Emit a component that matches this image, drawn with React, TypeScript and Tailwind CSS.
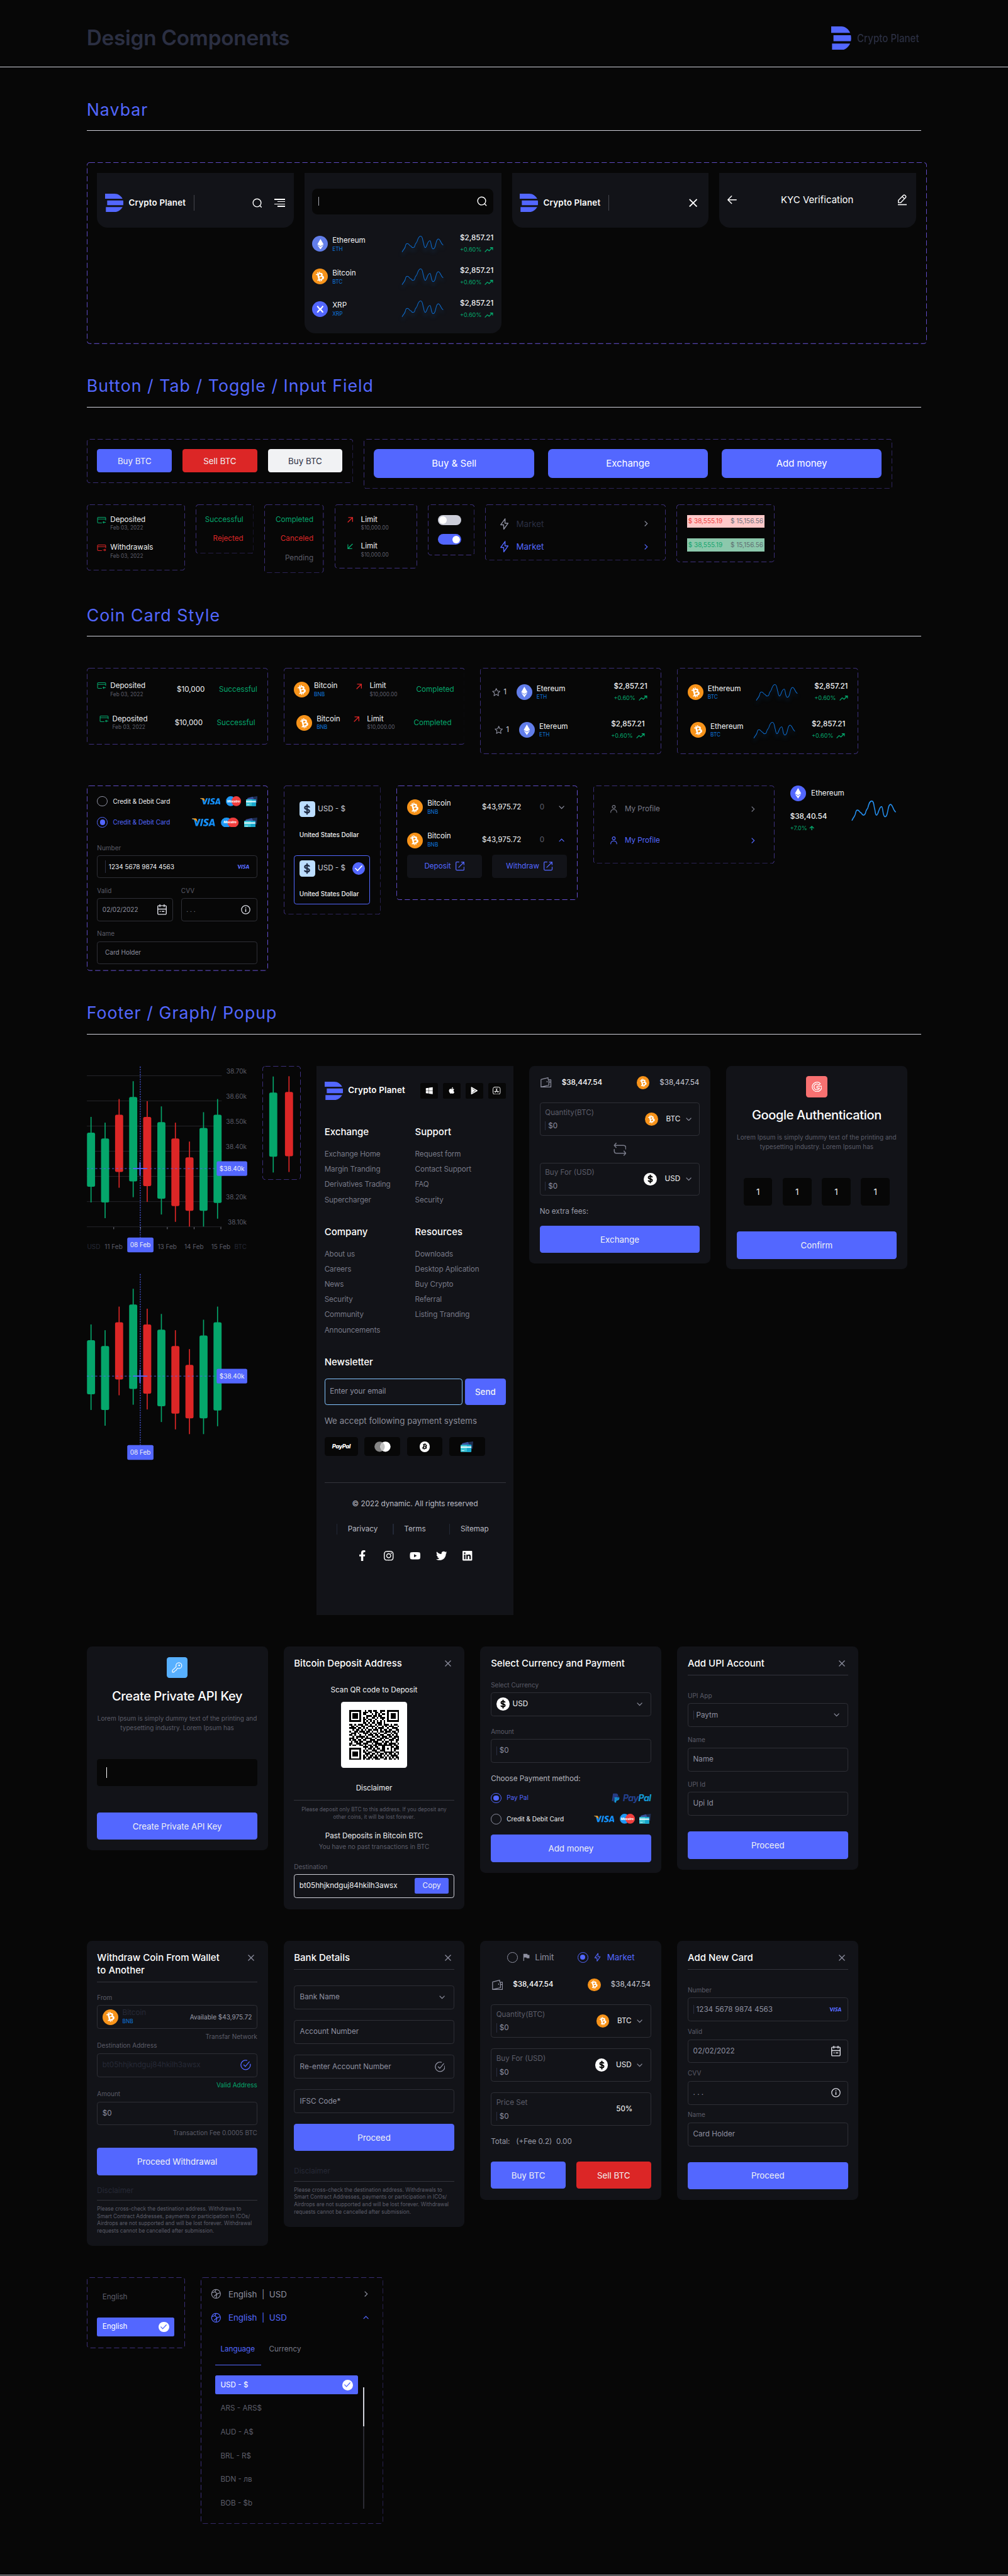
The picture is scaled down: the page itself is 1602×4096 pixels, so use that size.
import React from "react";
import type { ReactNode } from "react";
import {
  FaApple,
  FaBtc,
  FaEthereum,
  FaFacebookF,
  FaInstagram,
  FaLinkedin,
  FaPaypal,
  FaTwitter,
  FaWindows,
  FaYoutube,
} from "react-icons/fa";
import { SiVisa } from "react-icons/si";

/* ---------- shared pieces ---------- */

type Box = { className?: string; children?: ReactNode };

function Dashed({ className = "", bright = false, children }: Box & { bright?: boolean }) {
  return (
    <div className={`relative shrink-0 ${className}`}>
      <svg className="pointer-events-none absolute inset-0 size-full" fill="none">
        <rect
          x="0.5"
          y="0.5"
          rx="5"
          className="h-[calc(100%-1px)] w-[calc(100%-1px)]"
          stroke="#7B61FF"
          strokeOpacity={bright ? 1 : 0.6}
          strokeDasharray="10 5"
        />
      </svg>
      {children}
    </div>
  );
}

function Section({ title, className = "", children }: Box & { title: string }) {
  return (
    <section className={`ml-[165px] flex flex-col ${className}`}>
      <h2 className="text-[32px] leading-[39px] tracking-[0.039em] text-[#5367FF]">{title}</h2>
      <div className="mt-[20px] h-px w-[1590px] shrink-0 bg-[#CFD0D9]" />
      {children}
    </section>
  );
}

function Card({ className = "", children }: Box) {
  return <div className={`flex w-[345px] shrink-0 flex-col rounded-[10px] bg-[#121318] px-[20px] ${className}`}>{children}</div>;
}

function Logo({ className = "" }: { className?: string }) {
  return (
    <svg viewBox="0 0 35 35" preserveAspectRatio="none" className={className} fill="#5367FF">
      <path d="M0 0H18C25 0 30 4 33.3 9.5H0Z" />
      <path d="M4 13H34.4C35.2 16 35.2 19 34.4 22H4Z" />
      <path d="M1.5 25.5H33.3C30 31 25 35 18 35H1.5Z" />
    </svg>
  );
}

function Btc({ className = "size-[30px]" }: { className?: string }) {
  return (
    <span className={`flex shrink-0 items-center justify-center rounded-full bg-[#F7931A] text-white ${className}`}>
      <FaBtc className="h-[62%] w-[62%] -rotate-14" />
    </span>
  );
}

function Eth({ className = "bg-[#627EEA]" }: { className?: string }) {
  return (
    <span className={`flex size-[30px] shrink-0 items-center justify-center rounded-full text-white ${className}`}>
      <FaEthereum className="size-[20px]" />
    </span>
  );
}

function Xrp() {
  return (
    <span className="flex size-[30px] shrink-0 items-center justify-center rounded-full bg-[#5367FF]">
      <svg viewBox="0 0 14 14" className="size-[14px]" fill="none" stroke="#fff" strokeWidth="2.6">
        <path d="M1.5 0.8L5 5.2Q7 7.2 9 5.2L12.5 0.8M1.5 13.2L5 8.8Q7 6.8 9 8.8L12.5 13.2" />
      </svg>
    </span>
  );
}

function Dollar({ className = "size-[25px] rounded-full bg-white text-black" }: { className?: string }) {
  return (
    <span className={`flex shrink-0 items-center justify-center ${className}`}>
      <svg viewBox="0 0 24 24" className="size-[72%]" fill="none" stroke="currentColor" strokeWidth="3">
        <path d="M12 1v22M17 8.2C16.4 6.2 14.5 5.2 12 5.2c-2.8 0-4.8 1.3-4.8 3.4 0 2 1.6 2.8 4.8 3.4s4.9 1.5 4.9 3.5c0 2.1-2 3.4-4.9 3.4-2.7 0-4.7-1.1-5.2-3.2" />
      </svg>
    </span>
  );
}

function Spark({ className = "h-[31px] w-[78px] text-[#0E6FD3] drop-shadow-[0_6px_4px_rgba(14,111,211,0.35)]", width = 1.2 }) {
  return (
    <svg viewBox="0 0 78 31" preserveAspectRatio="none" fill="none" stroke="currentColor" strokeWidth={width} strokeLinecap="round" className={`shrink-0 overflow-visible ${className}`}>
      <path d="M.2 30.5C4 24 4.5 25.5 6 21C7.5 14 9 14.5 11 15C14 16 14 19 17 19.5C19 23.5 22.5 23.5 24 20C26 12 27 14.5 28.5 11C30.5 4 32 .5 35.5 .5C39.5 .5 39 9 41 14C42 20 42.5 22.5 44 22.5C47.5 22.5 48 9.3 53 9.3C56 9.3 54.5 25 59.5 25C65 25 63.5 6 69 6C73 6 73.5 15 78 17.5" />
    </svg>
  );
}

function Trend() {
  return (
    <svg viewBox="0 0 17 10" className="h-[10px] w-[17px]" fill="none" stroke="currentColor" strokeWidth="1.6">
      <path d="M.8 9.3L5.5 4.3L9 7L15.5 .8M10.8 .8H15.7V5.5" />
    </svg>
  );
}

function Search() {
  return (
    <svg viewBox="0 0 20 20" className="size-[19px]" fill="none" stroke="#fff" strokeWidth="1.8" strokeLinecap="round">
      <circle cx="9.5" cy="9.5" r="8" />
      <path d="M15.3 15.3L18.6 18.6" />
    </svg>
  );
}

function Cross({ className = "size-[12px] text-[#8E90A0]" }: { className?: string }) {
  return (
    <svg viewBox="0 0 12 12" className={`shrink-0 ${className}`} fill="none" stroke="currentColor" strokeWidth="1.5">
      <path d="M.6 .6L11.4 11.4M11.4 .6L.6 11.4" />
    </svg>
  );
}

function Chevron({ className = "" }: { className?: string }) {
  return (
    <svg viewBox="0 0 11 7" className={`h-[7px] w-[11px] shrink-0 ${className}`} fill="none" stroke="currentColor" strokeWidth="1.5">
      <path d="M.8 .8L5.5 5.6L10.2 .8" />
    </svg>
  );
}

function CardArrow({ out = false }: { out?: boolean }) {
  return (
    <svg viewBox="0 0 18 14" className={`h-[13px] w-[18px] shrink-0 ${out ? "text-[#DC2626]" : "text-[#05A66B]"}`} fill="none" stroke="currentColor" strokeWidth="1.4">
      <path d="M9.5 12.3H2.2Q.7 12.3 .7 10.8V2.2Q.7 .7 2.2 .7H15.8Q17.3 .7 17.3 2.2V7M.7 4.3H17.3" />
      {out ? <path d="M11.5 11H17M15 8.8L17.2 11L15 13.2" /> : <path d="M17.5 11H12M14 8.8L11.8 11L14 13.2" />}
    </svg>
  );
}

function Diagonal({ down = false }: { down?: boolean }) {
  return (
    <svg viewBox="0 0 11 11" className={`size-[11px] shrink-0 ${down ? "rotate-180 text-[#05A66B]" : "text-[#DC2626]"}`} fill="none" stroke="currentColor" strokeWidth="1.6">
      <path d="M.8 10.2L9.8 1.2M1.8 1H10V9.2" />
    </svg>
  );
}

function Stack({ top, bottom, className = "", subClass = "text-[#5C5D69]", topClass = "text-[#F1F2F4]" }: { top: string; bottom: string; className?: string; subClass?: string; topClass?: string }) {
  return (
    <div className={`flex flex-col ${className}`}>
      <span className={`text-[14px] leading-[19px] ${topClass}`}>{top}</span>
      <span className={`text-[10px] leading-[14px] ${subClass}`}>{bottom}</span>
    </div>
  );
}

const SYM = "text-[#0E75DD]";

function Price() {
  return (
    <div className="flex w-[64px] flex-col">
      <span className="text-[14px] leading-[23px] font-[450] text-[#F1F2F4]">$2,857.21</span>
      <span className="flex items-center gap-[6px] text-[11px] leading-[22px] text-[#05A66B]">
        +0.60% <Trend />
      </span>
    </div>
  );
}

function Visa({ className = "h-[13px] w-[39px]" }: { className?: string }) {
  return (
    <span className={`relative flex items-center justify-center overflow-hidden ${className}`}>
      <SiVisa className="h-[300%] w-full shrink-0 text-[#148EF7]" />
      <svg viewBox="0 0 10 8" className="absolute top-0 left-0 h-[60%] w-[26%]" fill="#F79A1A">
        <path d="M0 .3H6Q8 .5 8.3 2.2L9.5 8Q7 2.5 0 .9Z" />
      </svg>
    </span>
  );
}

function Maestro({ className = "h-[19px] w-[29px]" }: { className?: string }) {
  return (
    <span className={`relative flex items-center justify-center ${className}`}>
      <svg viewBox="0 0 30 19" preserveAspectRatio="none" className="absolute inset-0 size-full">
        <circle cx="9.5" cy="9.5" r="9.4" fill="#1E98F5" />
        <circle cx="20.5" cy="9.5" r="9.4" fill="#F03E3E" />
      </svg>
      <span className="relative text-[6.5px] font-bold tracking-[-0.04em] text-white italic">Maestro</span>
    </span>
  );
}

function Wallets({ className = "h-[19px] w-[22px]" }: { className?: string }) {
  return (
    <svg viewBox="0 0 24 19" preserveAspectRatio="none" className={className}>
      <path d="M12 1.5L24 0L23 13L12 14Z" fill="#1F2F55" />
      <path d="M3 3.5L14 .8L18 9H2Z" fill="#37509B" />
      <rect y="6" width="20.5" height="13" rx="1" fill="#3CC5D6" />
      <rect x="12" y="6" width="8.5" height="13" rx="1" fill="#17A6CC" />
      <rect y="9" width="20.5" height="2.6" fill="#E4FAFC" />
      <rect x="2" y="16" width="5" height="1" fill="#E4FAFC" />
    </svg>
  );
}

function Radio({ on = false }: { on?: boolean }) {
  return (
    <span className={`flex size-[20px] shrink-0 items-center justify-center rounded-full border ${on ? "border-[#5367FF]" : "border-[#8E90A0]"}`}>
      {on && <span className="size-[10px] rounded-full bg-[#5367FF]" />}
    </span>
  );
}

function Field({ className = "h-[45.5px] px-[10px]", children }: Box) {
  return <div className={`flex w-full shrink-0 items-center rounded-[5px] border border-[#2E2F36] ${className}`}>{children}</div>;
}

function Label({ className = "", children }: Box) {
  return <span className={`text-[12px] leading-[15px] text-[#5C5D69] ${className}`}>{children}</span>;
}

function Button({ className = "mt-[20px] bg-[#5367FF]", children }: Box) {
  return <div className={`flex h-[52px] shrink-0 items-center justify-center rounded-[5px] text-[16px] text-[#F1F2F4] ${className}`}>{children}</div>;
}

function Caret({ className = "h-[17px] bg-[#2B2F42]" }: { className?: string }) {
  return <span className={`w-px shrink-0 ${className}`} />;
}

function Rule({ className = "" }: { className?: string }) {
  return <div className={`h-px shrink-0 bg-[#33343C] ${className}`} />;
}

function CalendarIcon() {
  return (
    <svg viewBox="0 0 18 20" className="h-[20px] w-[18px] shrink-0" fill="none" stroke="#DDDEE6" strokeWidth="1.7">
      <rect x=".9" y="2.5" width="16.2" height="16.5" rx="1.5" />
      <path d="M.9 9H17.1M5 0V5M13 0V5M4.5 13.5H6.5M8.5 13.5H13.5" />
    </svg>
  );
}

function InfoIcon() {
  return (
    <svg viewBox="0 0 18 18" className="size-[18px] shrink-0" fill="none" stroke="#DDDEE6" strokeWidth="1.5">
      <circle cx="9" cy="9" r="8" />
      <path d="M9 7.8V13.2M9 4.6V6.3" strokeWidth="1.8" />
    </svg>
  );
}

function RingCheck({ className = "" }: { className?: string }) {
  return (
    <svg viewBox="0 0 20 20" className={`size-[20px] shrink-0 ${className}`} fill="none" stroke="currentColor" strokeWidth="1.6" strokeLinecap="round">
      <path d="M12.5 1.4A9 9 0 1 0 18.9 8.5" />
      <path d="M6.5 10L9.5 13L17 4" />
    </svg>
  );
}

function SolidCheck({ className = "size-[24px] bg-[#5367FF] text-white" }: { className?: string }) {
  return (
    <span className={`flex shrink-0 items-center justify-center rounded-full ${className}`}>
      <svg viewBox="0 0 14 11" className="w-[60%]" fill="none" stroke="currentColor" strokeWidth="1.8" strokeLinecap="round">
        <path d="M1 5.5L5 9.7L13 1" />
      </svg>
    </span>
  );
}

/* ---------- navbar ---------- */

function NavShell({ className = "", children }: Box) {
  return <div className={`w-[375px] shrink-0 rounded-b-[20px] bg-[#121318] px-[15px] ${className}`}>{children}</div>;
}

function Brand({ divider = false }: { divider?: boolean }) {
  return (
    <div className="flex items-center">
      <Logo className="size-[35px]" />
      <span className="ml-[10px] w-[110px] text-[16px] leading-[19px] font-semibold tracking-[0.015em] whitespace-nowrap text-white">Crypto Planet</span>
      {divider && <span className="ml-[14px] h-[30px] w-[1.5px] bg-[#45464D]" />}
    </div>
  );
}

function Navbar() {
  const coins = [
    { icon: <Eth />, name: "Ethereum", sym: "ETH" },
    { icon: <Btc />, name: "Bitcoin", sym: "BTC" },
    { icon: <Xrp />, name: "XRP", sym: "XRP" },
  ];
  return (
    <Section title="Navbar" className="mt-[61px] h-[527px]">
      <Dashed bright className="mt-[60px] flex h-[346px] w-[1600px] items-start gap-[20px] p-[20px]">
        <NavShell className="flex h-[105px] items-center justify-between pt-[10px]">
          <Brand divider />
          <div className="flex items-center gap-[24px]">
            <Search />
            <div className="mr-[2px] flex w-[20px] flex-col items-end gap-[2.6px]">
              <span className="h-[1.7px] w-[20px] bg-white" />
              <span className="h-[1.7px] w-[14px] bg-white" />
              <span className="h-[1.7px] w-[20px] bg-white" />
              <span className="h-[1.7px] w-[14px] bg-white" />
            </div>
          </div>
        </NavShell>
        <NavShell className="h-[306px] pt-[30px]">
          <div className="flex h-[50px] items-center justify-between rounded-[10px] bg-[#070707] pr-[12px] pl-[12px]">
            <Caret className="h-[17px] bg-[#A8A9B3]" />
            <Search />
          </div>
          <div className="mt-[35px] flex flex-col gap-[20px]">
            {coins.map((c) => (
              <div key={c.name} className="flex h-[42px] items-center">
                {c.icon}
                <Stack top={c.name} bottom={c.sym} subClass={SYM} className="ml-[8px] w-[133px] pt-[2px]" />
                <Spark />
                <div className="ml-auto">
                  <Price />
                </div>
              </div>
            ))}
          </div>
        </NavShell>
        <NavShell className="flex h-[105px] items-center justify-between pt-[10px]">
          <Brand divider />
          <svg viewBox="0 0 16 16" className="mr-[7px] size-[16px]" fill="none" stroke="#fff" strokeWidth="2.2">
            <path d="M1 1L15 15M15 1L1 15" />
          </svg>
        </NavShell>
        <NavShell className="flex h-[105px] items-center justify-between pb-[1px]">
          <svg viewBox="0 0 18 16" className="h-[16px] w-[18px]" fill="none" stroke="#fff" strokeWidth="1.8" strokeLinecap="round" strokeLinejoin="round">
            <path d="M1 8H17M8 1L1 8L8 15" />
          </svg>
          <span className="text-[18px] leading-[22px] text-white">KYC Verification</span>
          <svg viewBox="0 0 17 21" className="mr-[3px] h-[21px] w-[17px]" fill="none" stroke="#fff" strokeWidth="1.7" strokeLinejoin="round">
            <path d="M1 16V11.5L10.5 1.8Q12 .5 13.5 1.8L14.8 3.2Q16 4.5 14.8 6L5.5 16ZM8.3 4.2L12.5 8.3" />
            <path d="M0 19.7H17" strokeWidth="1.9" />
          </svg>
        </NavShell>
      </Dashed>
    </Section>
  );
}

/* ---------- buttons, tabs, toggles ---------- */

function Zap({ className = "" }: { className?: string }) {
  return (
    <svg viewBox="0 0 16 22" className={`h-[22px] w-[16px] shrink-0 ${className}`} fill="none" stroke="currentColor" strokeWidth="1.7" strokeLinejoin="round">
      <path d="M9.3 1L1 12.5H6.5L6.8 21L15 9.5H9Z" />
    </svg>
  );
}

function ChevronRight({ className = "" }: { className?: string }) {
  return (
    <svg viewBox="0 0 7 11" className={`h-[11px] w-[7px] shrink-0 ${className}`} fill="none" stroke="currentColor" strokeWidth="1.5">
      <path d="M.8 .8L5.6 5.5L.8 10.2" />
    </svg>
  );
}

function Controls() {
  return (
    <Section title="Button / Tab / Toggle / Input Field" className="h-[437px]">
      <div className="mt-[60px] flex h-[95px] items-start gap-[20px]">
        <Dashed className="flex w-[507.5px] gap-[20px] p-[20px]">
          <div className="flex h-[44px] flex-1 items-center justify-center rounded-[5px] bg-[#5367FF] text-[16px] text-[#F1F2F4]">Buy BTC</div>
          <div className="flex h-[44px] flex-1 items-center justify-center rounded-[5px] bg-[#DC2626] text-[16px] text-[#F1F2F4]">Sell BTC</div>
          <div className="flex h-[44px] flex-1 items-center justify-center rounded-[5px] bg-[#F1F2F4] text-[16px] text-[#2B2F42]">Buy BTC</div>
        </Dashed>
        <Dashed className="flex w-[1007px] gap-[26px] p-[20px]">
          {["Buy & Sell", "Exchange", "Add money"].map((t) => (
            <div key={t} className="flex h-[55px] flex-1 items-center justify-center rounded-[8px] bg-[#5367FF] text-[18px] text-white">
              {t}
            </div>
          ))}
        </Dashed>
      </div>
      <div className="mt-[30px] flex items-start gap-[20.5px]">
        <Dashed className="flex h-[126px] w-[187px] flex-col gap-[20px] p-[20px]">
          {["Deposited", "Withdrawals"].map((t, i) => (
            <div key={t} className="flex items-start gap-[7px]">
              <span className="pt-[4px]">
                <CardArrow out={i === 1} />
              </span>
              <Stack top={t} bottom="Feb 03, 2022" />
            </div>
          ))}
        </Dashed>
        <Dashed className="flex h-[94px] w-[111px] flex-col items-end gap-[20px] p-[20px] text-[14px] leading-[17px]">
          <span className="text-[#05A66B]">Successful</span>
          <span className="text-[#DC2626]">Rejected</span>
        </Dashed>
        <Dashed className="flex h-[131px] w-[113px] flex-col items-end gap-[20px] p-[20px] text-[14px] leading-[17px]">
          <span className="text-[#05A66B]">Completed</span>
          <span className="text-[#DC2626]">Canceled</span>
          <span className="text-[#5C5D69]">Pending</span>
        </Dashed>
        <Dashed className="flex h-[122px] w-[157px] flex-col gap-[18px] py-[20px] pl-[24px]">
          {[false, true].map((d) => (
            <div key={String(d)} className="flex items-start gap-[15px]">
              <span className="pt-[4px]">
                <Diagonal down={d} />
              </span>
              <Stack top="Limit" bottom="$10,000.00" />
            </div>
          ))}
        </Dashed>
        <Dashed className="flex h-[97px] w-[89px] flex-col gap-[17px] px-[19px] py-[20px]">
          <span className="flex h-[20px] w-[45px] items-center rounded-full bg-[#CBCDD8] px-[3px]">
            <span className="size-[14px] rounded-full bg-white" />
          </span>
          <span className="flex h-[20px] w-[45px] items-center justify-end rounded-full bg-[#5367FF] px-[3px]">
            <span className="size-[14px] rounded-full bg-white" />
          </span>
        </Dashed>
        <Dashed className="flex h-[107px] w-[344px] flex-col gap-[22px] pt-[26px] pr-[34px] pl-[28px]">
          <div className="flex h-[22px] items-center text-[#8E90A0]">
            <Zap />
            <span className="ml-[15px] flex-1 text-[16px] text-[#2B2F42]">Market</span>
            <ChevronRight />
          </div>
          <div className="flex h-[22px] items-center text-[#5367FF]">
            <Zap />
            <span className="ml-[15px] flex-1 text-[16px]">Market</span>
            <ChevronRight />
          </div>
        </Dashed>
        <Dashed className="flex h-[110px] w-[187px] flex-col gap-[20px] px-[20px] pt-[20px] text-[12px]">
          <div className="flex h-[25px] items-center justify-between bg-[#FFC9C9] px-[2px]">
            <span className="text-[#EF3A3A]">$ 38,555.19</span>
            <span className="text-[#6B6F7B]">$ 15,156.56</span>
          </div>
          <div className="flex h-[25px] items-center justify-between bg-[#8CC8AC] px-[2px]">
            <span className="text-[#12A46C]">$ 38,555.19</span>
            <span className="text-[#5E6B70]">$ 15,156.56</span>
          </div>
        </Dashed>
      </div>
    </Section>
  );
}

/* ---------- coin cards ---------- */

function CardChoice({ on = false, wide = false, className = "" }: { on?: boolean; wide?: boolean; className?: string }) {
  return (
    <div className={`flex h-[20px] shrink-0 items-center ${className}`}>
      <Radio on={on} />
      <span className={`ml-[10px] flex-1 text-[12px] ${on ? "text-[#5367FF]" : "text-[#F1F2F4]"}`}>Credit &amp; Debit Card</span>
      {wide ? (
        <>
          <Visa className="h-[15px] w-[44px]" />
          <Maestro className="ml-[11px] h-[19px] w-[34px]" />
          <Wallets className="ml-[10px] h-[19px] w-[25px]" />
        </>
      ) : (
        <>
          <Visa />
          <Maestro className="ml-[10px] h-[19px] w-[29px]" />
          <Wallets className="ml-[9px] h-[19px] w-[22px]" />
        </>
      )}
    </div>
  );
}

function CurrencyTile({ selected = false }: { selected?: boolean }) {
  return (
    <div className={`h-[93px] w-[145px] rounded-[5px] border px-[9px] pt-[9px] ${selected ? "border-[#5367FF]" : "border-transparent"}`}>
      <div className="flex items-center">
        <Dollar className="size-[30px] rounded-[5px] bg-[#BCDDFF] text-[#1E2A42]" />
        <span className="ml-[5px] flex-1 text-[14px] text-[#CBCDD8]">USD - $</span>
        {selected && <SolidCheck />}
      </div>
      <div className="mt-[26px] text-[12px] leading-[15px] font-[450] whitespace-nowrap text-[#F1F2F4]">United States Dollar</div>
    </div>
  );
}

function OpenIcon() {
  return (
    <svg viewBox="0 0 17 17" className="size-[17px]" fill="none" stroke="currentColor" strokeWidth="1.5">
      <path d="M7 .8H2.2Q.8 .8 .8 2.2V14.8Q.8 16.2 2.2 16.2H14.8Q16.2 16.2 16.2 14.8V10M5.5 11.5L15.5 1.5M10.5 .9H16.1V6.5" />
    </svg>
  );
}

function UserIcon() {
  return (
    <svg viewBox="0 0 13 15" className="h-[15px] w-[13px]" fill="none" stroke="currentColor" strokeWidth="1.4" strokeLinecap="round">
      <circle cx="6.5" cy="3.6" r="2.8" />
      <path d="M.8 14.2Q.8 8.7 6.5 8.7T12.2 14.2" />
    </svg>
  );
}

function CoinCards() {
  return (
    <Section title="Coin Card Style" className="h-[758px]">
      <div className="mt-[60px] flex h-[164px] items-start gap-[30px]">
        <Dashed className="flex h-[146px] w-[345px] flex-col gap-[30px] pt-[25px]">
          {["px-[20px]", "px-[24px]"].map((p) => (
            <div key={p} className={`flex h-[33px] items-start ${p}`}>
              <span className="pt-[3px]">
                <CardArrow />
              </span>
              <Stack top="Deposited" bottom="Feb 03, 2022" className="ml-[7px]" />
              <span className="ml-auto text-[14px] leading-[33px] text-[#F1F2F4]">$10,000</span>
              <span className="ml-[27px] text-[14px] leading-[33px] text-[#05A66B]">Successful</span>
            </div>
          ))}
        </Dashed>
        <Dashed className="flex h-[146px] w-[345px] flex-col gap-[30px] pt-[25px]">
          {["px-[20px]", "px-[25px]"].map((p, i) => (
            <div key={p} className={`flex h-[33px] items-center ${p}`}>
              <Btc />
              <Stack top="Bitcoin" bottom="BNB" subClass={SYM} className={i === 0 ? "ml-[8px] w-[80px]" : "ml-[8px] w-[70px]"} />
              <span className="mb-[13px]">
                <Diagonal />
              </span>
              <Stack top="Limit" bottom="$10,000.00" className="ml-[15px]" />
              <span className="ml-auto text-[14px] text-[#05A66B]">Completed</span>
            </div>
          ))}
        </Dashed>
        <Dashed className="flex h-[164px] w-[345px] flex-col gap-[22px] pt-[21px]">
          {["pl-[22px] pr-[27px]", "pl-[27px] pr-[32px]"].map((p) => (
            <div key={p} className={`flex h-[50px] items-center ${p}`}>
              <svg viewBox="0 0 16 16" className="size-[16px]" fill="none" stroke="#8E90A0" strokeWidth="1.3" strokeLinejoin="round">
                <path d="M8 1L10.1 5.6L15 6.2L11.4 9.6L12.3 14.6L8 12.1L3.7 14.6L4.6 9.6L1 6.2L5.9 5.6Z" />
              </svg>
              <span className="ml-[6px] w-[25px] text-[14px] text-[#CBCDD8]">1</span>
              <Eth />
              <Stack top="Etereum" bottom="ETH" subClass={SYM} className="ml-[8px] pt-[2px]" />
              <div className="ml-auto">
                <Price />
              </div>
            </div>
          ))}
        </Dashed>
        <Dashed className="flex h-[164px] w-[345px] flex-col gap-[22px] pt-[21px]">
          {["px-[20px]", "px-[25px]"].map((p, i) => (
            <div key={p} className={`flex h-[50px] items-center ${p}`}>
              <Btc />
              <Stack top="Ethereum" bottom="BTC" subClass={SYM} className={i === 0 ? "ml-[8px] w-[93px] pt-[2px]" : "ml-[8px] w-[83px] pt-[2px]"} />
              <Spark />
              <div className="ml-auto">
                <Price />
              </div>
            </div>
          ))}
        </Dashed>
      </div>

      <div className="mt-[60px] flex items-start gap-[30px]">
        <Dashed bright className="flex h-[353px] w-[345px] flex-col p-[20px]">
          <CardChoice />
          <CardChoice on wide className="mt-[20px]" />
          <div className="mt-[15px] h-px w-[265px] bg-[#CFD0D9]" />
          <Label className="mt-[16px]">Number</Label>
          <Field className="mt-[7px] h-[43.5px] px-[14px]">
            <Caret className="h-[24px] bg-[#2B2F42]" />
            <span className="ml-[6px] flex-1 text-[12px] text-[#F1F2F4]">1234 5678 9874 4563</span>
            <span className="flex h-[10px] w-[24px] items-center overflow-hidden">
              <SiVisa className="size-[24px] shrink-0 text-[#5367FF]" />
            </span>
          </Field>
          <div className="mt-[16.5px] flex gap-[15px]">
            <div className="flex flex-1 flex-col">
              <Label>Valid</Label>
              <Field className="mt-[7px] h-[43.5px] justify-between pr-[11px] pl-[9px]">
                <span className="text-[12px] text-[#8E90A0]">02/02/2022</span>
                <CalendarIcon />
              </Field>
            </div>
            <div className="flex flex-1 flex-col">
              <Label>CVV</Label>
              <Field className="mt-[7px] h-[43.5px] justify-between pr-[12px] pl-[9px]">
                <span className="text-[12px] text-[#8E90A0]">. . .</span>
                <InfoIcon />
              </Field>
            </div>
          </div>
          <Label className="mt-[16.5px]">Name</Label>
          <Field className="mt-[7px] h-[43.5px] px-[14px]">
            <span className="text-[12px] text-[#8E90A0]">Card Holder</span>
          </Field>
        </Dashed>

        <Dashed className="flex h-[246px] w-[185px] flex-col gap-[20px] p-[20px]">
          <CurrencyTile />
          <CurrencyTile selected />
        </Dashed>

        <Dashed bright className="flex h-[218px] w-[345px] flex-col px-[20px] pt-[25px]">
          {[false, true].map((open) => (
            <div key={String(open)} className={`flex h-[33px] items-center ${open ? "mt-[30px]" : ""}`}>
              <Btc />
              <Stack top="Bitcoin" bottom="BNB" subClass={SYM} className="ml-[9px] w-[104px]" />
              <span className="w-[110px] text-[14px] text-[#F1F2F4]">$43,975.72</span>
              <span className="text-[14px] text-[#5C5D69]">0</span>
              <Chevron className={`mr-[5px] ml-auto ${open ? "rotate-180 text-[#5367FF]" : "text-[#8E90A0]"}`} />
            </div>
          ))}
          <div className="mt-[11px] flex gap-[19px] text-[14px] text-[#5367FF]">
            {["Deposit", "Withdraw"].map((t) => (
              <div key={t} className="flex h-[44px] flex-1 items-center justify-center gap-[9px] rounded-[5px] bg-[#121318]">
                {t} <OpenIcon />
              </div>
            ))}
          </div>
        </Dashed>

        <Dashed className="flex h-[149px] w-[345px] flex-col gap-[42px] pt-[36px] pr-[37px] pl-[33px]">
          {["text-[#777987]", "text-[#5367FF]"].map((c) => (
            <div key={c} className={`flex h-[18px] items-center ${c}`}>
              <UserIcon />
              <span className="ml-[14px] flex-1 text-[14px]">My Profile</span>
              <ChevronRight />
            </div>
          ))}
        </Dashed>

        <div className="flex w-[202px]">
          <div className="flex w-[118px] flex-col">
            <div className="flex items-center gap-[10px] text-[14px] text-[#F1F2F4]">
              <Eth className="bg-[#5367FF]" /> Ethereum
            </div>
            <span className="mt-[20px] text-[14px] leading-[19px] font-[450] text-[#F1F2F4]">$38,40.54</span>
            <span className="mt-[4px] flex items-center gap-[4px] text-[11px] leading-[16px] text-[#05A66B]">
              +7.0%
              <svg viewBox="0 0 10 9" className="h-[9px] w-[10px]" fill="none" stroke="currentColor" strokeWidth="1.8">
                <path d="M5 9V1.5M1 4.8L5 1.2L9 4.8" />
              </svg>
            </span>
          </div>
          <Spark className="mt-[29px] h-[38px] w-[83px] text-[#2590F0]" width={1.7} />
        </div>
      </div>
    </Section>
  );
}

/* ---------- charts ---------- */

type Candle = { x: number; up: boolean; wick: [number, number]; body: [number, number] };

const CANDLES: Candle[] = [
  { x: 8, up: true, wick: [97, 260], body: [127, 230] },
  { x: 34.8, up: true, wick: [108, 290], body: [138, 260] },
  { x: 61.5, up: false, wick: [63, 232], body: [93, 202] },
  { x: 88.3, up: true, wick: [29, 250], body: [59, 220] },
  { x: 115, up: false, wick: [67, 259], body: [97, 229] },
  { x: 142, up: true, wick: [77, 283], body: [107, 253] },
  { x: 168.7, up: false, wick: [108, 297], body: [138, 267] },
  { x: 195.5, up: false, wick: [144, 306], body: [174, 276] },
  { x: 222.3, up: true, wick: [88, 306], body: [118, 276] },
  { x: 249, up: true, wick: [63, 291], body: [93, 261] },
];

function CandleShape({ c }: { c: Candle }) {
  return (
    <g fill={c.up ? "#05A66B" : "#DC2626"}>
      <rect x={c.x - 1} y={c.wick[0]} width="2" height={c.wick[1] - c.wick[0]} />
      <rect x={c.x - 7.7} y={c.body[0]} width="15.4" height={c.body[1] - c.body[0]} rx="3" />
    </g>
  );
}

function Chart({ grid = false }: { grid?: boolean }) {
  const labels = ["38.70k", "38.60k", "38.50k", "38.40k", "", "38.20k", "38.10k"];
  const dates: [number, string][] = [
    [34, "11 Feb"],
    [134.7, "13 Feb"],
    [185.7, "14 Feb"],
    [237, "15 Feb"],
  ];
  return (
    <svg viewBox="0 0 306 356" className="h-[356px] w-[306px] text-[12px]">
      {grid && (
        <g>
          {labels.map((l, i) => (
            <g key={i}>
              <rect x="0" y={18 + i * 48} width="257" height="1" fill="#2A2B31" />
              <text x="304.5" y={14 + i * 48} textAnchor="end" fill="#5C5D69">
                {l}
              </text>
            </g>
          ))}
          {[51.3, 102.3, 153.3, 204.3, 255.3].map((x) => (
            <rect key={x} x={x - 0.5} y="307" width="1" height="4" fill="#8E90A0" />
          ))}
          {dates.map(([x, t]) => (
            <text key={t} x={x} y="349" fill="#5C5D69">
              {t}
            </text>
          ))}
          <text x="0.5" y="349" fill="#262936">
            USD
          </text>
          <text x="304.5" y="349" textAnchor="end" fill="#262936">
            BTC
          </text>
        </g>
      )}
      {CANDLES.map((c) => (
        <CandleShape key={c.x} c={c} />
      ))}
      <path d="M101.8 1V327" stroke="#5367FF" strokeWidth="1.3" strokeDasharray="2.5 2.2" fill="none" />
      <path d="M0 195.5H248" stroke="#5367FF" strokeWidth="1" strokeDasharray="4 4" fill="none" />
      <path d="M88.3 195.5H114.3M101.3 183.5V208.5" stroke="#5367FF" strokeWidth="2.2" fill="none" />
      <rect x="247.3" y="181.5" width="58.2" height="28" rx="3" fill="#5367FF" />
      <text x="276.5" y="199.8" textAnchor="middle" fill="#F1F2F4">
        $38.40k
      </text>
      <rect x="77" y="327" width="50" height="28" rx="3" fill="#5367FF" />
      <text x="102" y="345.3" textAnchor="middle" fill="#F1F2F4">
        08 Feb
      </text>
    </svg>
  );
}

/* ---------- footer ---------- */

function LinkColumn({ title, links, className = "" }: { title: string; links: string[]; className?: string }) {
  return (
    <div className={`flex flex-col ${className}`}>
      <span className="text-[18px] leading-[22px] font-[450] text-white">{title}</span>
      <div className="mt-[16px] flex flex-col">
        {links.map((l) => (
          <span key={l} className="text-[14px] leading-[29px] tracking-[-0.008em] text-[#777987]">
            {l}
          </span>
        ))}
      </div>
    </div>
  );
}

function Footer() {
  const badge = "flex h-[30px] w-[33px] items-center justify-center rounded-[3px] bg-[#070707] text-white";
  const pay = "flex h-[36px] w-[68px] items-center justify-center rounded-[5px] bg-[#070707]";
  return (
    <div className="flex h-[1047px] w-[375px] shrink-0 flex-col bg-[#121318] px-[15px] pt-[30px]">
      <div className="flex h-[35px] items-center justify-between">
        <Brand />
        <div className="flex gap-[10px]">
          <span className={badge}>
            <FaWindows className="size-[15px]" />
          </span>
          <span className={badge}>
            <FaApple className="size-[14px]" />
          </span>
          <span className={badge}>
            <svg viewBox="0 0 14 16" className="h-[15px] w-[14px]" fill="none" stroke="#fff" strokeWidth="1.3" strokeLinejoin="round">
              <path d="M1 1L13 8L1 15Z" fill="#fff" />
              <path d="M3 4L9.5 8L3 12" stroke="#070707" strokeWidth="0.8" />
            </svg>
          </span>
          <span className={badge}>
            <svg viewBox="0 0 16 16" className="size-[15px]" fill="none" stroke="#fff" strokeWidth="1.2" strokeLinecap="round">
              <rect x=".7" y=".7" width="14.6" height="14.6" rx="3.5" />
              <path d="M6.8 3.8L10.8 11.8M9.2 3.8L5.2 11.8M3.5 9.7H8.5M10.8 9.7H12.5" />
            </svg>
          </span>
        </div>
      </div>
      <div className="mt-[51px] grid h-[190px] grid-cols-2">
        <LinkColumn title="Exchange" links={["Exchange Home", "Margin Tranding", "Derivatives Trading", "Supercharger"]} />
        <LinkColumn title="Support" links={["Request form", "Contact Support", "FAQ", "Security"]} />
      </div>
      <div className="grid h-[248px] grid-cols-2">
        <LinkColumn title="Company" links={["About us", "Careers", "News", "Security", "Community", "Announcements"]} />
        <LinkColumn title="Resources" links={["Downloads", "Desktop Aplication", "Buy Crypto", "Referral", "Listing Tranding"]} />
      </div>
      <span className="text-[18px] leading-[22px] font-[450] text-white">Newsletter</span>
      <div className="mt-[20px] flex h-[50px] gap-[5px]">
        <div className="flex w-[263px] items-center rounded-[5px] border border-[#84C5FF] px-[9px] text-[14px] text-[#8E90A0]">Enter your email</div>
        <div className="flex flex-1 items-center justify-center rounded-[5px] bg-[#5367FF] text-[16px] font-medium text-[#F1F2F4]">Send</div>
      </div>
      <span className="mt-[21px] text-[16px] leading-[20px] whitespace-nowrap text-[#8A8C99]">We accept following payment systems</span>
      <div className="mt-[21px] flex gap-[12.5px]">
        <span className="flex h-[36px] w-[64px] items-center justify-center rounded-[5px] bg-[#070707] text-[11px] font-extrabold tracking-[-0.04em] text-white italic">PayPal</span>
        <span className={pay}>
          <svg viewBox="0 0 31 20" className="h-[20px] w-[31px]">
            <circle cx="10" cy="10" r="9.8" fill="#858585" />
            <circle cx="21" cy="10" r="9.8" fill="#fff" />
            <path d="M15.5 1.9A9.8 9.8 0 0 1 15.5 18.1A9.8 9.8 0 0 1 15.5 1.9Z" fill="#C2C2C2" />
          </svg>
        </span>
        <span className={pay}>
          <span className="flex size-[20px] items-center justify-center rounded-full bg-white text-black">
            <FaBtc className="size-[12px] rotate-14" />
          </span>
        </span>
        <span className={pay}>
          <Wallets className="h-[20px] w-[24px]" />
        </span>
      </div>
      <Rule className="mt-[50px]" />
      <span className="mt-[31px] text-center text-[14px] leading-[17px] text-[#BCBDC6]">© 2022 dynamic. All rights reserved</span>
      <div className="mt-[30px] ml-[23px] flex text-[14px] leading-[20px] text-[#BCBDC6]">
        {["Parivacy", "Terms", "Sitemap"].map((t) => (
          <span key={t} className="flex w-[109px] gap-[20px]">
            <span className="w-[1.5px] bg-[#222836]" />
            {t}
          </span>
        ))}
      </div>
      <div className="mt-[30px] flex justify-center text-[21px] text-white">
        {[FaFacebookF, FaInstagram, FaYoutube, FaTwitter, FaLinkedin].map((Icon, i) => (
          <span key={i} className="flex w-[50px] justify-center">
            <Icon />
          </span>
        ))}
      </div>
    </div>
  );
}

/* ---------- popups ---------- */

function WalletIcon() {
  return (
    <svg viewBox="0 0 21 20" className="h-[20px] w-[21px]" fill="none" stroke="#8E90A0" strokeWidth="1.5" strokeLinejoin="round">
      <path d="M1 4L14.5 .8V4.5M1 4V18.5H19.8V4.5H14.5M1 18.5L16 15V4.5" />
      <path d="M12.5 7V9.5" />
      <path d="M16 9H19.8" />
    </svg>
  );
}

function BalanceRow({ className = "" }: { className?: string }) {
  return (
    <div className={`flex h-[25px] shrink-0 items-center text-[14px] ${className}`}>
      <span className="ml-[2px]">
        <WalletIcon />
      </span>
      <span className="ml-[19px] font-[450] text-white">$38,447.54</span>
      <Btc className="mr-[19px] ml-auto size-[25px]" />
      <span className="mr-[1px] text-[#CBCDD8]">$38,447.54</span>
    </div>
  );
}

function AmountField({ label, coin, className = "" }: { label: string; coin: "BTC" | "USD" | "50%"; className?: string }) {
  return (
    <Field className={`h-[63.5px] px-[9px] ${className}`}>
      <div className="flex flex-1 flex-col gap-[9px]">
        <span className="text-[14px] leading-[17px] text-[#5C5D69]">{label}</span>
        <span className="flex items-center gap-[5px] text-[14px] leading-[17px] text-[#8E90A0]">
          <Caret />
          $0
        </span>
      </div>
      {coin === "50%" ? (
        <span className="mr-[25px] text-[14px] text-white">50%</span>
      ) : (
        <>
          {coin === "BTC" ? <Btc className="size-[25px]" /> : <Dollar />}
          <span className="ml-[15px] text-[14px] text-[#F1F2F4]">{coin}</span>
          <Chevron className="mr-[6px] ml-[10px] text-[#8E90A0]" />
        </>
      )}
    </Field>
  );
}

function ExchangeCard() {
  return (
    <Card className="h-[377px] pt-[20px]">
      <BalanceRow />
      <AmountField label="Quantity(BTC)" coin="BTC" className="mt-[25px]" />
      <div className="flex h-[51px] items-center justify-center">
        <svg viewBox="0 0 25 25" className="size-[25px]" fill="none" stroke="#777987" strokeWidth="1.9" strokeLinecap="round" strokeLinejoin="round">
          <path d="M5 .9L1.5 5L5 9M1.5 5H19Q23.5 5 23.5 9.5V12M20 16L23.5 20L20 24M23.5 20H5.5Q1.5 20 1.5 16V13" />
        </svg>
      </div>
      <AmountField label="Buy For (USD)" coin="USD" />
      <span className="mt-[21px] text-[14px] leading-[17px] text-[#9A9CA9]">No extra fees:</span>
      <Button className="mt-[19px] bg-[#5367FF]">Exchange</Button>
    </Card>
  );
}

function KeyCard({ tile, title, children, action }: { tile: ReactNode; title: string; children: ReactNode; action: string }) {
  return (
    <Card className="h-[388px] items-stretch pt-[20px] text-center">
      {tile}
      <span className="mt-[20px] text-[24px] leading-[29px] font-[450] tracking-[-0.018em] whitespace-nowrap text-white">{title}</span>
      <p className="mt-[19px] text-[12px] leading-[18px] whitespace-nowrap text-[#5C5D69]">
        Lorem Ipsum is simply dummy text of the printing and
        <br />
        typesetting industry. Lorem Ipsum has
      </p>
      <div className="mt-[50px] flex h-[52px]">{children}</div>
      <Button className="mt-[50px] bg-[#5367FF]">{action}</Button>
    </Card>
  );
}

function CardTitle({ children, className = "" }: Box) {
  return (
    <div className={`flex items-start justify-between ${className}`}>
      <span className="text-[18px] leading-[24px] font-[450] text-white">{children}</span>
      <Cross className="mt-[6px] mr-[6px] size-[12px] text-[#8E90A0]" />
    </div>
  );
}

const QR = [
  "11111110010110110011101111111",
  "10000010111010011010001000001",
  "10111010110001010101101011101",
  "10111010001110110110001011101",
  "10111010101001101011101011101",
  "10000010110110010001001000001",
  "11111110101010101010101111111",
  "00000000110101101110100000000",
  "11010111011010010110111010110",
  "01101001100111101001010111001",
  "11110110101001010111001001110",
  "00101101010110111010110110011",
  "10011011101101001011011101101",
  "01110100111010110100110010110",
  "11010010010111011011001101010",
  "00101111101001101101110110111",
  "11101001011110010011011001101",
  "10110110110011101110100111011",
  "01011011001110111001011010010",
  "11001110111001011110110111101",
  "10110011010110110111111110110",
  "00000000111011011001100011011",
  "11111110010110101101101010111",
  "10000010101001110011100010100",
  "10111010110110011100111111011",
  "10111010011101101011010110101",
  "10111010101011010110101011110",
  "10000010110110111011010101011",
  "11111110101101011100110110101",
];

function QrCode() {
  return (
    <div className="mx-auto flex size-[125px] items-center justify-center rounded-[5px] bg-white">
      <svg viewBox="0 0 29 29" className="size-[95px]" shapeRendering="crispEdges">
        {QR.flatMap((row, y) => [...row].map((v, x) => (v === "1" ? <rect key={`${x}-${y}`} x={x} y={y} width="1" height="1" /> : null)))}
      </svg>
    </div>
  );
}

function PayPalLogo() {
  return (
    <span className="flex items-center text-[17px] font-bold tracking-[-0.04em] italic">
      <span className="relative mr-[6px] flex h-[20px] w-[17px] items-center">
        <FaPaypal className="size-[18px] text-[#263C85]" />
        <FaPaypal className="absolute top-[3px] left-[2px] size-[17px] text-[#139AD6] [clip-path:inset(35%_0_0_30%)]" />
      </span>
      <span className="text-[#24408E]">Pay</span>
      <span className="text-[#139AD6]">Pal</span>
    </span>
  );
}

function Disclaimer({ first, className = "" }: { first: string; className?: string }) {
  return (
    <div className={`flex flex-col ${className}`}>
      <span className="text-[14px] leading-[17px] text-[#262936]">Disclaimer</span>
      <Rule className="mt-[9.5px]" />
      <p className="mt-[10px] text-[10px] leading-[14px] whitespace-nowrap text-[#5C5D69]">
        Please cross-check the destination address. {first} to
        <br />
        Smart Contract Addresses, payments or participation in ICOs/
        <br />
        Airdrops are not supported and will be lost forever. Withdrawal
        <br />
        requests cannot be cancelled after submission.
      </p>
    </div>
  );
}

function Popups() {
  const ph = "text-[14px] text-[#8E90A0]";
  return (
    <>
      <div className="mt-[60px] flex h-[501px] items-start gap-[30px]">
        <KeyCard
          title="Create Private API Key"
          action="Create Private API Key"
          tile={
            <span className="mx-auto flex size-[40px] shrink-0 items-center justify-center rounded-[5px] bg-[#57B0FF]">
              <svg viewBox="0 0 20 20" className="size-[20px]" fill="none" stroke="#fff" strokeWidth="1.4" strokeLinejoin="round">
                <path d="M13.5 1A5.5 5.5 0 0 1 13.5 12Q12 12 11 11.5L9.5 13L9 15L7.5 15.5L4 19H1.2V15.5L8.5 8.5Q8 7.5 8 6.5A5.5 5.5 0 0 1 13.5 1Z" />
                <circle cx="14" cy="6" r=".8" fill="#fff" />
              </svg>
            </span>
          }
        >
          <div className="flex flex-1 items-center rounded-[5px] bg-[#070707] pl-[17px]">
            <Caret className="h-[20px] bg-white" />
          </div>
        </KeyCard>

        <Card className="h-[501px] pt-[20.5px] text-center">
          <CardTitle className="text-left">Bitcoin Deposit Address</CardTitle>
          <span className="mt-[30px] text-[14px] leading-[17px] text-[#F1F2F4]">Scan QR code to Deposit</span>
          <div className="mt-[14px]">
            <QrCode />
          </div>
          <span className="mt-[30px] text-[14px] leading-[17px] text-[#F1F2F4]">Disclaimer</span>
          <Rule className="mt-[15px]" />
          <p className="mt-[10.5px] text-[10px] leading-[14px] text-[#5C5D69]">
            Please deposit only BTC to this address. If you deposit any
            <br />
            other coins, it will be lost forever.
          </p>
          <span className="mt-[20px] text-[14px] leading-[17px] text-[#F1F2F4]">Past Deposits in Bitcoin BTC</span>
          <span className="mt-[4px] text-[12px] leading-[18px] text-[#5C5D69]">You have no past transactions in BTC</span>
          <Label className="mt-[21px] text-left">Destination</Label>
          <div className="mt-[6.5px] flex h-[45.5px] items-center justify-between rounded-[5px] border border-[#CFD0D9] pr-[9px] pl-[9px] text-[14px] text-[#F1F2F4]">
            bt05hhjkndguj84hkilh3awsx
            <span className="flex h-[30px] w-[65px] items-center justify-center rounded-[3px] bg-[#5367FF]">Copy</span>
          </div>
        </Card>

        <Card className="h-[431px] pt-[20.5px]">
          <span className="text-[18px] leading-[24px] font-[450] text-white">Select Currency and Payment</span>
          <Label className="mt-[21px]">Select Currency</Label>
          <Field className="mt-[6.5px] h-[45.5px] px-[9px]">
            <Dollar />
            <span className="ml-[6px] flex-1 text-[14px] text-[#F1F2F4]">USD</span>
            <Chevron className="mr-[6px] text-[#8E90A0]" />
          </Field>
          <Label className="mt-[22px]">Amount</Label>
          <Field className="mt-[6.5px] h-[45.5px] px-[9px]">
            <Caret />
            <span className={`ml-[5px] ${ph}`}>$0</span>
          </Field>
          <span className="mt-[21px] text-[14px] leading-[17px] text-[#B4B5BF]">Choose Payment method:</span>
          <div className="mt-[19px] flex h-[20px] items-center">
            <Radio on />
            <span className="ml-[10px] flex-1 text-[12px] text-[#5367FF]">Pay Pal</span>
            <PayPalLogo />
          </div>
          <CardChoice className="mt-[20px]" />
          <Button>Add money</Button>
        </Card>

        <Card className="h-[425px] pt-[20.5px]">
          <CardTitle>Add UPI Account</CardTitle>
          <Rule className="mt-[9.5px]" />
          <Label className="mt-[31px]">UPI App</Label>
          <Field className="mt-[7px] h-[45.5px] px-[9px]">
            <Caret />
            <span className={`ml-[5px] flex-1 ${ph}`}>Paytm</span>
            <Chevron className="mr-[6px] text-[#8E90A0]" />
          </Field>
          <Label className="mt-[16.5px]">Name</Label>
          <Field className="mt-[7.5px] h-[45.5px] px-[9px]">
            <span className={ph}>Name</span>
          </Field>
          <Label className="mt-[17px]">UPI Id</Label>
          <Field className="mt-[7px] h-[45.5px] px-[9px]">
            <span className={ph}>Upi Id</span>
          </Field>
          <Button className="mt-[30px] bg-[#5367FF]">Proceed</Button>
        </Card>
      </div>

      <div className="mt-[60px] flex h-[581px] items-start gap-[30px]">
        <Card className="h-[581px] pt-[20.5px]">
          <CardTitle>
            Withdraw Coin From Wallet
            <br />
            to Another
          </CardTitle>
          <Rule className="mt-[9.5px]" />
          <Label className="mt-[21px]">From</Label>
          <Field className="mt-[7px] h-[45.5px] px-[9px]">
            <Btc />
            <Stack top="Bitcoin" bottom="BNB" topClass="text-[#262936]" subClass={SYM} className="ml-[8px] flex-1" />
            <span className="text-[12px] text-[#9A9CA9]">Available $43,975.72</span>
          </Field>
          <Label className="mt-[7px] text-right">Transfar Network</Label>
          <Label className="mt-[2.5px]">Destination Address</Label>
          <Field className="mt-[7px] h-[45.5px] px-[9px]">
            <span className="flex-1 text-[14px] text-[#262936]">bt05hhjkndguj84hkilh3awsx</span>
            <RingCheck className="mr-[2px] text-[#5367FF]" />
          </Field>
          <span className="mt-[7px] text-right text-[12px] leading-[15px] text-[#05A66B]">Valid Address</span>
          <Label className="mt-[2.5px]">Amount</Label>
          <Field className="mt-[7px] h-[45.5px] px-[9px]">
            <span className={ph}>$0</span>
          </Field>
          <Label className="mt-[7px] text-right">Transaction Fee 0.0005 BTC</Label>
          <Button className="mt-[21px] bg-[#5367FF]">Proceed Withdrawal</Button>
          <Disclaimer first="Withdrawa" className="mt-[20.5px]" />
        </Card>

        <Card className="h-[545px] pt-[20.5px]">
          <CardTitle>Bank Details</CardTitle>
          <Rule className="mt-[9.5px]" />
          <div className="mt-[30px] flex flex-col gap-[20.5px]">
            <Field>
              <span className={`flex-1 ${ph}`}>Bank Name</span>
              <Chevron className="mr-[6px] text-[#8E90A0]" />
            </Field>
            <Field>
              <span className={ph}>Account Number</span>
            </Field>
            <Field>
              <span className={`flex-1 ${ph}`}>Re-enter Account Number</span>
              <RingCheck className="mr-[6px] text-[#8E90A0]" />
            </Field>
            <Field>
              <span className={ph}>IFSC Code*</span>
            </Field>
          </div>
          <Button>Proceed</Button>
          <Disclaimer first="Withdrawals" className="mt-[30px]" />
        </Card>

        <Card className="h-[494px] pt-[20px]">
          <div className="flex h-[22px] items-center justify-center text-[16px]">
            <Radio />
            <svg viewBox="0 0 14 16" className="mx-[10px] h-[15px] w-[13px]" fill="#8E90A0">
              <path d="M1 1H9L10 3H13.5V10H8L7 8.300H2.500V15.500H1Z" />
            </svg>
            <span className="text-[#8E90A0]">Limit</span>
            <span className="ml-[45px] flex items-center">
              <Radio on />
              <Zap className="mx-[10px] scale-75 text-[#5367FF]" />
              <span className="text-[#5367FF]">Market</span>
            </span>
          </div>
          <BalanceRow className="mt-[29px]" />
          <AmountField label="Quantity(BTC)" coin="BTC" className="mt-[25px]" />
          <AmountField label="Buy For (USD)" coin="USD" className="mt-[20.5px]" />
          <AmountField label="Price Set" coin="50%" className="mt-[20.5px]" />
          <span className="mt-[21px] text-[14px] leading-[17px] text-[#9A9CA9]">Total: &nbsp; (+Fee 0.2) &nbsp;0.00</span>
          <div className="mt-[30px] flex gap-[20px]">
            <Button className="flex-1 bg-[#5367FF]">Buy BTC</Button>
            <Button className="flex-1 bg-[#DC2626]">Sell BTC</Button>
          </div>
        </Card>

        <Card className="h-[494px] pt-[20.5px]">
          <CardTitle>Add New Card</CardTitle>
          <Rule className="mt-[9.5px]" />
          <Label className="mt-[31px]">Number</Label>
          <Field className="mt-[7px] h-[45.5px] px-[9px]">
            <Caret />
            <span className={`ml-[5px] flex-1 ${ph}`}>1234 5678 9874 4563</span>
            <SiVisa className="mr-[2px] size-[24px] text-[#5367FF]" />
          </Field>
          <Label className="mt-[11.8px]">Valid</Label>
          <Field className="mt-[7px] h-[45.5px] pr-[13px] pl-[9px]">
            <span className={`flex-1 ${ph}`}>02/02/2022</span>
            <CalendarIcon />
          </Field>
          <Label className="mt-[11.8px]">CVV</Label>
          <Field className="mt-[7px] h-[45.5px] pr-[13px] pl-[9px]">
            <span className={`flex-1 ${ph}`}>. . .</span>
            <InfoIcon />
          </Field>
          <Label className="mt-[11.8px]">Name</Label>
          <Field className="mt-[7px] h-[45.5px] px-[9px]">
            <span className={ph}>Card Holder</span>
          </Field>
          <Button className="mt-[30px] bg-[#5367FF]">Proceed</Button>
        </Card>
      </div>
    </>
  );
}

function Globe({ className = "" }: { className?: string }) {
  return (
    <svg viewBox="0 0 20 20" className={`size-[20px] ${className}`} fill="none" stroke="currentColor" strokeWidth="1.5">
      <circle cx="10" cy="10" r="8.5" />
      <path d="M2 8L8 6L10 2M8 6L12 10L18 8M12 10L10 18M12 10L6 15" />
    </svg>
  );
}

function Language() {
  return (
    <div className="mt-[60px] flex items-start gap-[30px]">
      <Dashed className="flex h-[135px] w-[187px] flex-col p-[20px]">
        <span className="h-[35px] pl-[10px] text-[14px] leading-[35px] text-[#5C5D69]">English</span>
        <div className="mt-[22px] flex h-[35px] items-center justify-between rounded-[3px] bg-[#5367FF] px-[10px] text-[14px] text-white">
          English <SolidCheck className="size-[20px] bg-white text-[#5367FF]" />
        </div>
      </Dashed>
      <Dashed className="flex h-[470px] w-[348px] flex-col px-[20px] pt-[20px]">
        <div className="flex h-[24px] items-center pr-[9px] text-[16px] text-[#8E90A0]">
          <Globe />
          <span className="ml-[13px] flex-1">English &nbsp;|&nbsp; USD</span>
          <ChevronRight />
        </div>
        <div className="mt-[21px] flex h-[24px] items-center pr-[7px] text-[16px] text-[#5367FF]">
          <Globe />
          <span className="ml-[13px] flex-1">English &nbsp;|&nbsp; USD</span>
          <Chevron className="rotate-180" />
        </div>
        <div className="mt-[39px] ml-[8px] flex w-[290px] text-[14px] leading-[17px]">
          <span className="border-b-2 border-[#5367FF] pr-[12px] pb-[22px] pl-[10px] text-[#5367FF]">Language</span>
          <span className="pb-[22px] pl-[15px] text-[#777987]">Currency</span>
        </div>
        <div className="mt-[19px] ml-[8px] flex gap-[10px]">
          <div className="flex w-[272px] flex-col text-[14px] leading-[45px] text-[#5C5D69]">
            <div className="mb-[5px] flex h-[36px] items-center justify-between rounded-[3px] bg-[#5367FF] px-[10px] text-white">
              USD - $ <SolidCheck className="size-[20px] bg-white text-[#5367FF]" />
            </div>
            {["ARS - ARS$", "AUD - A$", "BRL - R$", "BDN - лв", "BOB - $b"].map((t) => (
              <span key={t} className="pl-[10px]">
                {t}
              </span>
            ))}
          </div>
          <div className="mt-[22px] h-[232px] w-[2px] bg-[#2B2B33]">
            <div className="h-[75px] bg-[#CFD0D9]" />
          </div>
        </div>
      </Dashed>
    </div>
  );
}

export default function App() {
  return (
    <div className="h-[4096px] w-[1602px] overflow-hidden bg-[#070707]">
      <div className="flex h-[4908px] w-[1920px] flex-col border-b border-[#CFD0D9] bg-[#070707] font-['Inter',sans-serif] [zoom:0.834375]">
        <header className="flex h-[128px] shrink-0 items-center justify-between border-b border-[#CFD0D9] pt-[18px] pr-[170px] pl-[165px]">
          <h1 className="text-[40px] leading-[48px] font-semibold tracking-[-0.3px] text-[#2B2F42]">Design Components</h1>
          <div className="flex items-center">
            <Logo className="h-[45px] w-[38px]" />
            <span className="ml-[11px] w-[118px] origin-left scale-x-[0.885] text-[20.5px] font-medium whitespace-nowrap text-[#2B2F42]">Crypto Planet</span>
          </div>
        </header>
        <Navbar />
        <Controls />
        <CoinCards />
        <Section title="Footer / Graph/ Popup" className="flex-1">
          <div className="mt-[60px] flex items-start gap-[30px]">
            <div className="flex w-[305px] flex-col gap-[40px]">
              <Chart grid />
              <Chart />
            </div>
            <Dashed className="h-[217px] w-[73px]">
              <svg viewBox="0 0 73 217" className="size-full">
                <CandleShape c={{ x: 20.7, up: true, wick: [20, 203], body: [50.5, 173] }} />
                <CandleShape c={{ x: 50.7, up: false, wick: [19.5, 202], body: [49.5, 172] }} />
              </svg>
            </Dashed>
            <Footer />
            <ExchangeCard />
            <KeyCard
              title="Google Authentication"
              action="Confirm"
              tile={
                <span className="mx-auto flex size-[40px] shrink-0 items-center justify-center rounded-[5px] bg-[#F87171]">
                  <svg viewBox="0 0 20 20" className="size-[20px]" fill="none" stroke="#fff" strokeWidth="1.5" strokeLinejoin="round">
                    <path d="M16.5 3.5A9 9 0 1 0 19 8.5H10V12H15A5.5 5.5 0 1 1 13.8 6Z" />
                  </svg>
                </span>
              }
            >
              <div className="flex flex-1 justify-center gap-[20px]">
                {[0, 1, 2, 3].map((i) => (
                  <span key={i} className="flex w-[54.5px] items-center justify-center rounded-[5px] bg-[#070707] text-[16px] text-[#F1F2F4]">
                    1
                  </span>
                ))}
              </div>
            </KeyCard>
          </div>
          <Popups />
          <Language />
        </Section>
      </div>
    </div>
  );
}
